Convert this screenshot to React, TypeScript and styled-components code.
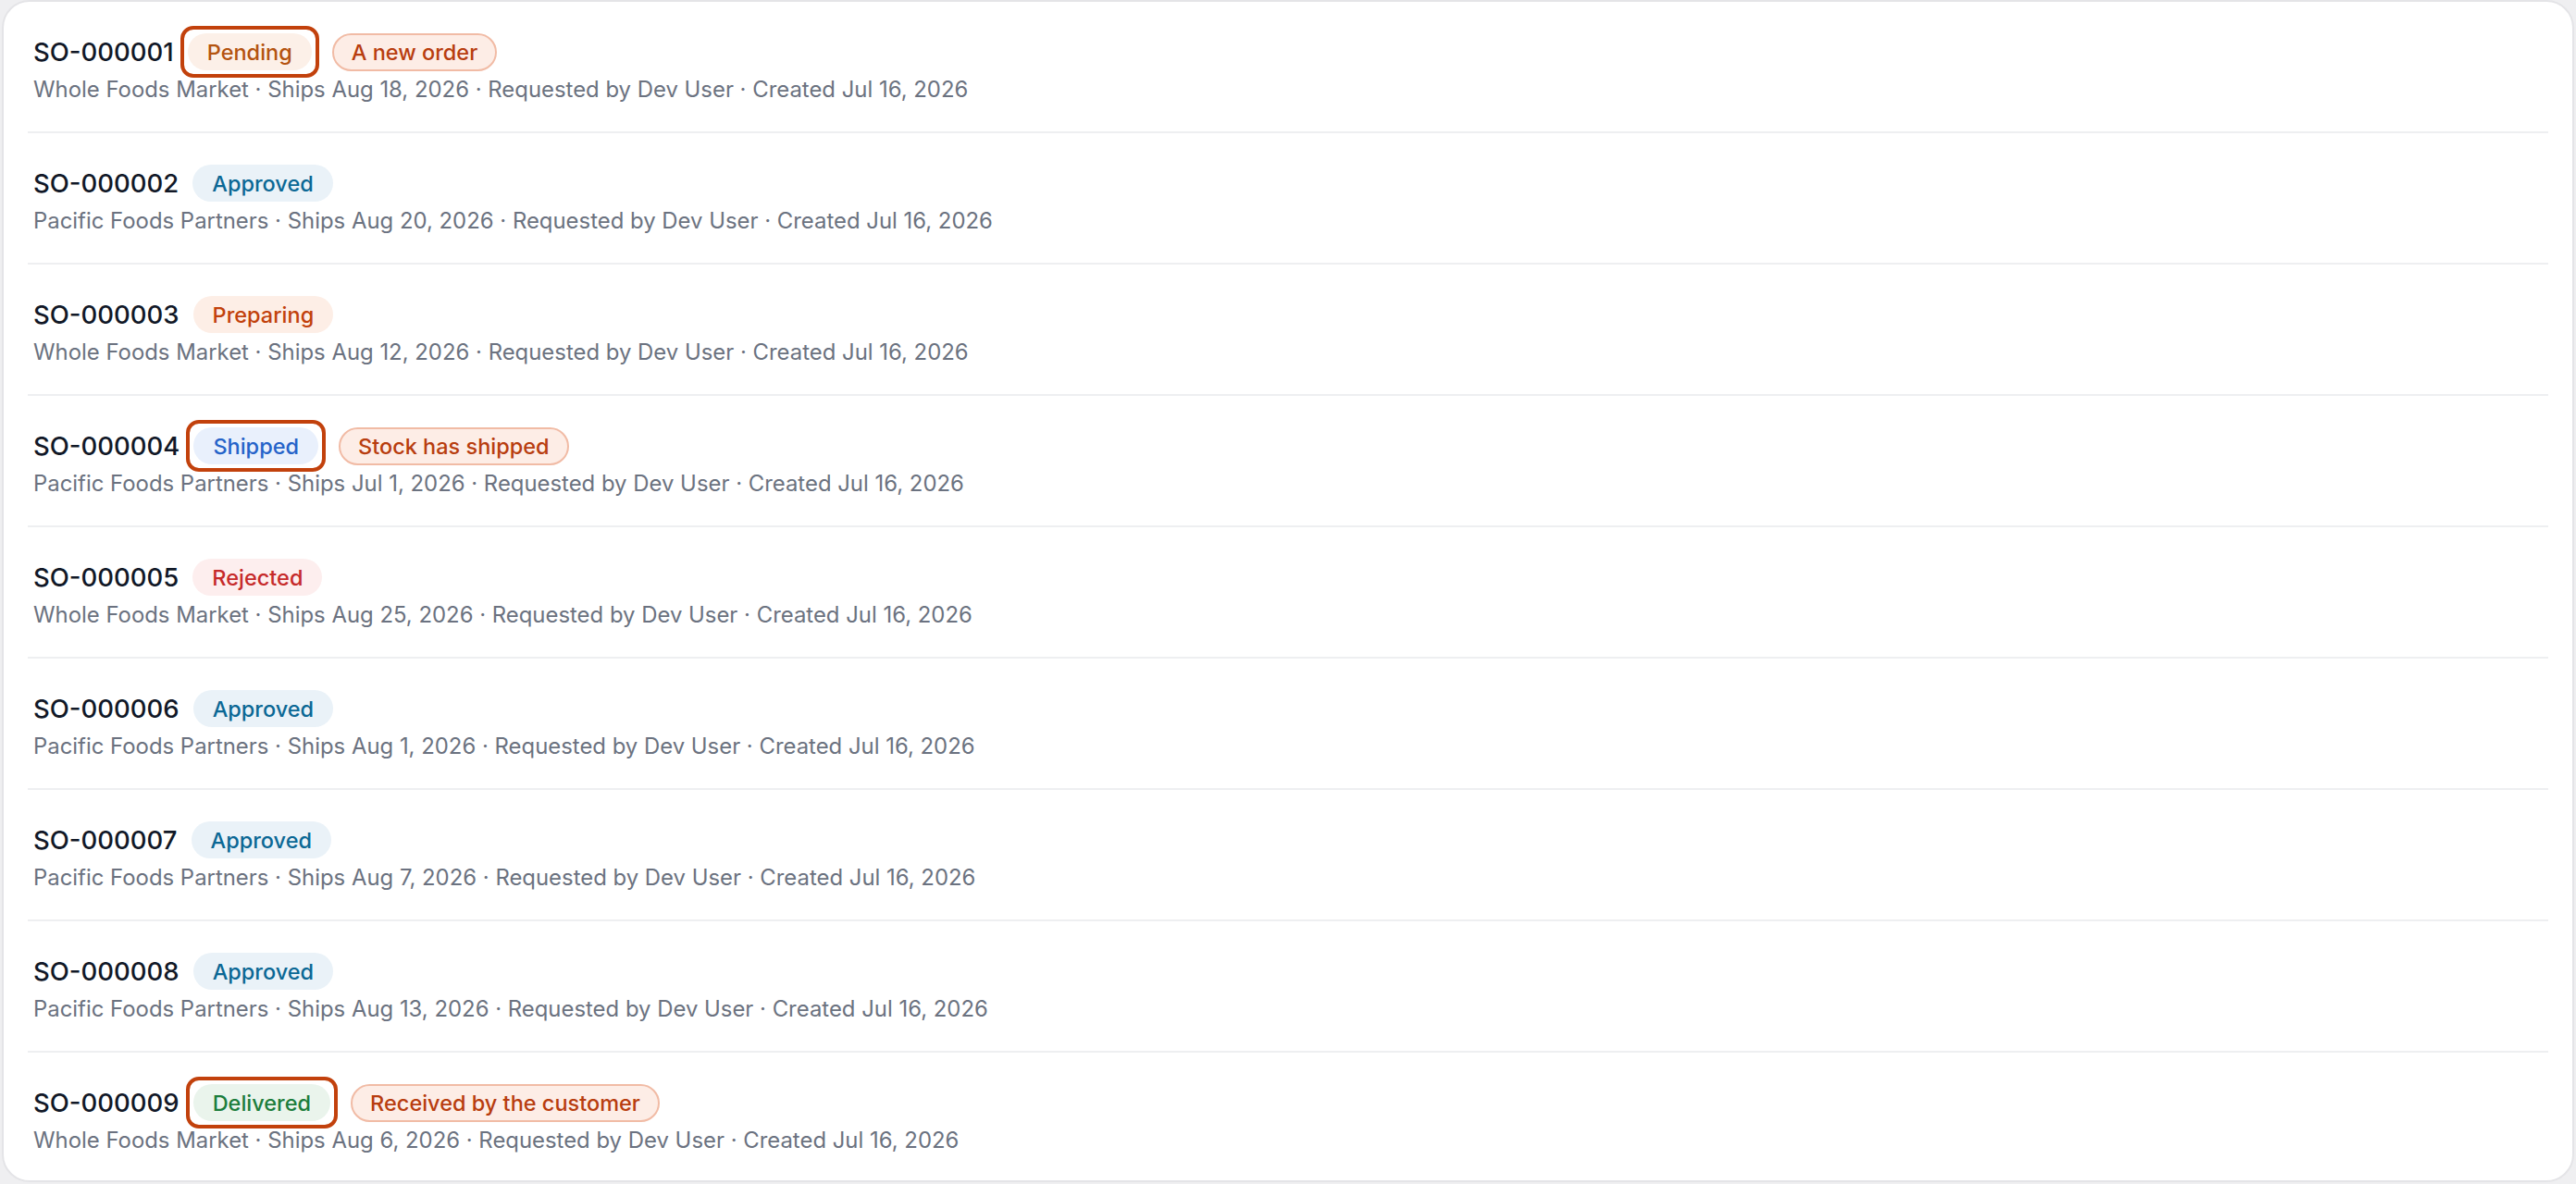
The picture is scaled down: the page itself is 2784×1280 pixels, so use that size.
import * as React from 'react';
import styled, {createGlobalStyle, css} from 'styled-components';

type Status = 'pending' | 'approved' | 'preparing' | 'shipped' | 'rejected' | 'delivered';

interface IOrder {
    code: string,
    status: Status,
    focused?: boolean,
    note?: string,
    customer: string,
    ships: string,
}

const GlobalStyle = createGlobalStyle`
    html, body {
        margin: 0;
        padding: 0;
        background-color: #efeff1;
    }
    body {
        font-family: Inter, "Noto Sans", "Liberation Sans", sans-serif;
        -webkit-font-smoothing: antialiased;
    }
`;

const statusColors: Record<Status, { bg: string, fg: string, label: string }> = {
    pending: {bg: '#fcf0e8', fg: '#b4530f', label: 'Pending'},
    approved: {bg: '#eaf2f8', fg: '#0b6895', label: 'Approved'},
    preparing: {bg: '#fdeee6', fg: '#c2410c', label: 'Preparing'},
    shipped: {bg: '#e9f0fc', fg: '#2563c9', label: 'Shipped'},
    rejected: {bg: '#fdeeee', fg: '#c62a2a', label: 'Rejected'},
    delivered: {bg: '#eaf4ec', fg: '#1c7d3c', label: 'Delivered'},
};

const orders: IOrder[] = [
    {code: 'SO-000001', status: 'pending', focused: true, note: 'A new order', customer: 'Whole Foods Market', ships: 'Aug 18, 2026'},
    {code: 'SO-000002', status: 'approved', customer: 'Pacific Foods Partners', ships: 'Aug 20, 2026'},
    {code: 'SO-000003', status: 'preparing', customer: 'Whole Foods Market', ships: 'Aug 12, 2026'},
    {code: 'SO-000004', status: 'shipped', focused: true, note: 'Stock has shipped', customer: 'Pacific Foods Partners', ships: 'Jul 1, 2026'},
    {code: 'SO-000005', status: 'rejected', customer: 'Whole Foods Market', ships: 'Aug 25, 2026'},
    {code: 'SO-000006', status: 'approved', customer: 'Pacific Foods Partners', ships: 'Aug 1, 2026'},
    {code: 'SO-000007', status: 'approved', customer: 'Pacific Foods Partners', ships: 'Aug 7, 2026'},
    {code: 'SO-000008', status: 'approved', customer: 'Pacific Foods Partners', ships: 'Aug 13, 2026'},
    {code: 'SO-000009', status: 'delivered', focused: true, note: 'Received by the customer', customer: 'Whole Foods Market', ships: 'Aug 6, 2026'},
];

const Card = styled.div`
    box-sizing: border-box;
    margin: 0 2px 2px;
    height: 1278px;
    background-color: #fff;
    border: 2px solid #e4e4e7;
    border-radius: 30px;
    overflow: hidden;
`;

const List = styled.ul`
    list-style: none;
    margin: 0;
    padding: 0 26px;
`;

const Row = styled.li`
    padding: 34px 6px 28px;
    border-bottom: 2px solid #eeeff1;

    &:last-child {
        border-bottom: none;
    }
`;

const Header = styled.div`
    display: flex;
    align-items: center;
    height: 40px;
`;

const Code = styled.span`
    font-size: 27.5px;
    font-weight: 500;
    color: #111827;
    margin-right: 15px;
`;

const StatusBadge = styled.span<{ $status: Status, $focused?: boolean }>`
    position: relative;
    display: inline-flex;
    align-items: center;
    height: 40px;
    padding: 0 21px;
    border-radius: 999px;
    font-size: 23.5px;
    font-weight: 500;
    background-color: ${(p) => statusColors[p.$status].bg};
    color: ${(p) => statusColors[p.$status].fg};

    ${(p) => p.$focused && css`
        &::after {
            content: '';
            position: absolute;
            inset: -8px;
            border: 4px solid #c2410c;
            border-radius: 14px;
        }
    `}
`;

const NoteBadge = styled.span`
    display: inline-flex;
    align-items: center;
    box-sizing: border-box;
    height: 41px;
    margin-left: 22px;
    padding: 0 19px;
    border-radius: 999px;
    border: 2px solid #f1bba5;
    background-color: #fdede6;
    color: #b83d0f;
    font-size: 23.5px;
    font-weight: 500;
`;

const Meta = styled.div`
    margin-top: 4px;
    font-size: 23.9px;
    line-height: 34px;
    color: #6b7280;
    white-space: nowrap;
`;

const OrderRow: React.FC<{ order: IOrder }> = ({order}) => (
    <Row>
        <Header>
            <Code>{order.code}</Code>
            <StatusBadge $status={order.status} $focused={order.focused}>
                {statusColors[order.status].label}
            </StatusBadge>
            {order.note && <NoteBadge>{order.note}</NoteBadge>}
        </Header>
        <Meta>
            {order.customer} · Ships {order.ships} · Requested by Dev User · Created Jul 16, 2026
        </Meta>
    </Row>
);

const App: React.FC = () => (
    <>
        <GlobalStyle/>
        <Card>
            <List>
                {orders.map((order) => <OrderRow key={order.code} order={order}/>)}
            </List>
        </Card>
    </>
);

export default App;
